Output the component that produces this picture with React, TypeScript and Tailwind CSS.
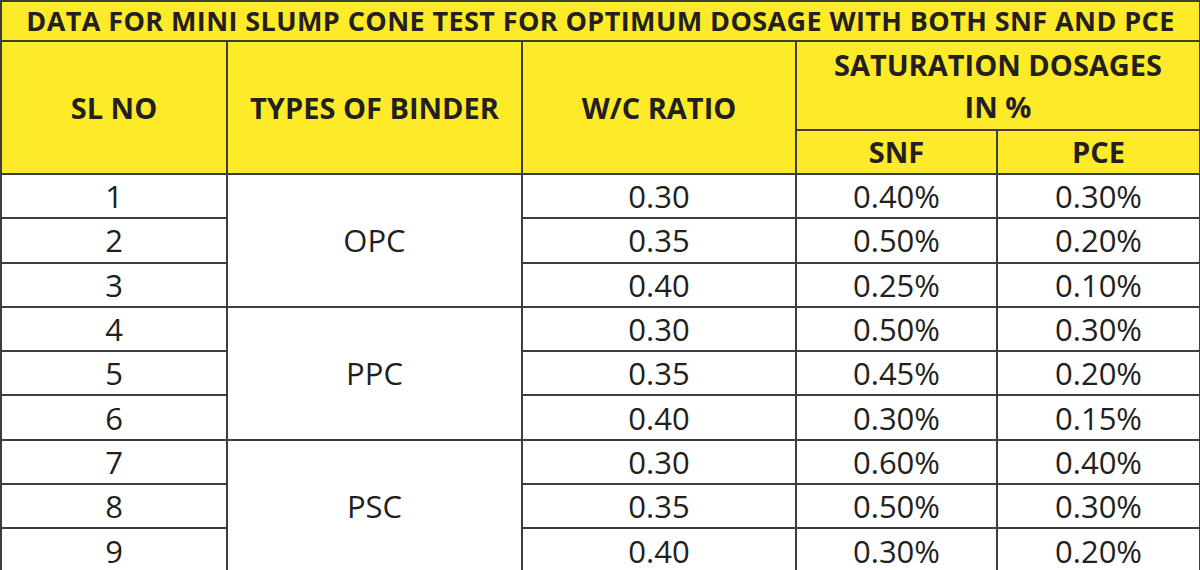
const rows = [
  { sl: 1, wc: "0.30", snf: "0.40%", pce: "0.30%" },
  { sl: 2, wc: "0.35", snf: "0.50%", pce: "0.20%" },
  { sl: 3, wc: "0.40", snf: "0.25%", pce: "0.10%" },
  { sl: 4, wc: "0.30", snf: "0.50%", pce: "0.30%" },
  { sl: 5, wc: "0.35", snf: "0.45%", pce: "0.20%" },
  { sl: 6, wc: "0.40", snf: "0.30%", pce: "0.15%" },
  { sl: 7, wc: "0.30", snf: "0.60%", pce: "0.40%" },
  { sl: 8, wc: "0.35", snf: "0.50%", pce: "0.30%" },
  { sl: 9, wc: "0.40", snf: "0.30%", pce: "0.20%" },
];

const binders: Record<number, string> = { 0: "OPC", 3: "PPC", 6: "PSC" };

const cell = "border-2 border-[#3d3d3d] text-center align-middle p-0";

export default function App() {
  return (
    <div className="w-[1200px] h-[570px] overflow-hidden bg-white font-['Open_Sans',sans-serif] text-[#231f20]">
      <table className="w-[1199px] table-fixed border-collapse">
        <colgroup>
          <col className="w-[226px]" />
          <col className="w-[295px]" />
          <col className="w-[274px]" />
          <col className="w-[201px]" />
          <col className="w-[203px]" />
        </colgroup>
        <thead>
          <tr className="h-[40px] bg-[#fdeb2a]">
            <th colSpan={5} className={`${cell} text-[27px] leading-[34px] font-bold tracking-[0.4px]`}>
              DATA FOR MINI SLUMP CONE TEST FOR OPTIMUM DOSAGE WITH BOTH SNF AND PCE
            </th>
          </tr>
          <tr className="h-[89px] bg-[#fdeb2a] text-[29px] leading-[36px] font-bold">
            <th rowSpan={2} className={cell}>SL NO</th>
            <th rowSpan={2} className={cell}>TYPES OF BINDER</th>
            <th rowSpan={2} className={cell}>W/C RATIO</th>
            <th colSpan={2} className={`${cell} leading-[42px]`}>
              SATURATION DOSAGES
              <br />
              IN %
            </th>
          </tr>
          <tr className="h-[44px] bg-[#fdeb2a] text-[29px] leading-[36px] font-bold">
            <th className={cell}>SNF</th>
            <th className={cell}>PCE</th>
          </tr>
        </thead>
        <tbody className="text-[31px] leading-[36px]">
          {rows.map((r, i) => (
            <tr key={r.sl} className="h-[44.3px]">
              <td className={cell}>{r.sl}</td>
              {binders[i] && (
                <td rowSpan={3} className={cell}>
                  {binders[i]}
                </td>
              )}
              <td className={cell}>{r.wc}</td>
              <td className={cell}>{r.snf}</td>
              <td className={cell}>{r.pce}</td>
            </tr>
          ))}
        </tbody>
      </table>
    </div>
  );
}
